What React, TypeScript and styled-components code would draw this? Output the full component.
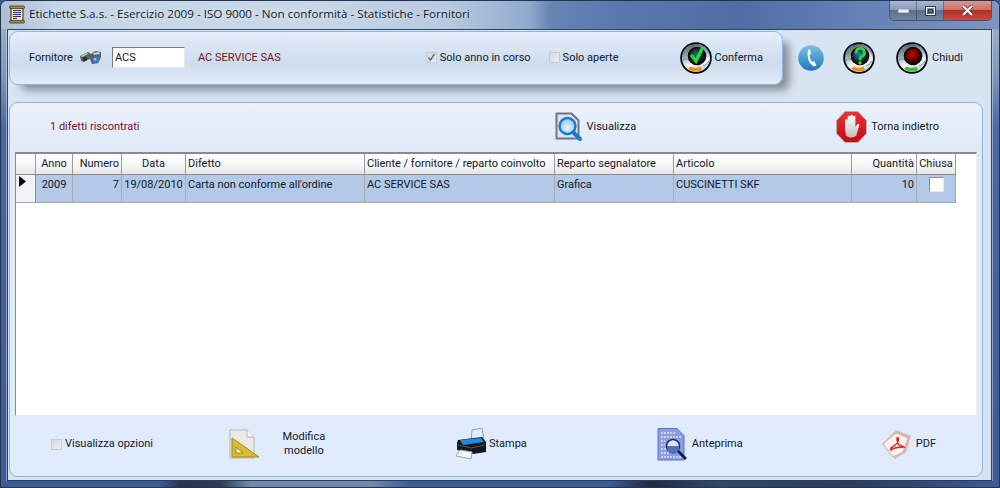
import React from "react";
import styled, { createGlobalStyle } from "styled-components";

const Global = createGlobalStyle`
  html, body { margin: 0; padding: 0; width: 1000px; height: 488px; overflow: hidden; background: #3c5a96; }
  body { font-family: Roboto, "Liberation Sans", Arial, sans-serif; font-size: 11px; color: #10182a; }
  * { box-sizing: border-box; }
`;

const Win = styled.div`
  width: 1000px; height: 488px; display: flex; flex-direction: column;
  border: 1px solid #24344f; border-radius: 7px 7px 0 0; overflow: hidden;
  background: linear-gradient(180deg, #a6b8d0 0, #8098bc 15%, #4a68a4 26%, #3d5a98 100%);
`;
const TitleBar = styled.div`
  height: 28px; flex: none; display: flex; align-items: flex-start; padding-left: 7px; position: relative;
  background: linear-gradient(90deg, #aebfd4 0, #c6d6e8 6%, #c9d8e9 30%, #b6c9e0 45%, #90a9cc 53%, #6684b5 55%, #5a78ae 62%, #4f6ea6 74%, #6180b4 85%, #7f95c0 100%);
`;
const AppIcon = styled.svg` width: 18px; height: 19px; margin-top: 4px; flex: none; `;
const TitleText = styled.span`
  font-family: "Open Sans", "Liberation Sans", sans-serif; font-size: 11.65px; margin: 4px 0 0 3px; color: #101c28; line-height: 17px;
  text-shadow: 0 0 6px rgba(255,255,255,.7);
`;
const Controls = styled.div`
  position: absolute; right: 7px; top: 0; display: flex; height: 20px; width: 103px;
  border: 1px solid #44546e; border-top: 0; border-radius: 0 0 5px 5px; overflow: hidden;
`;
const Ctl = styled.div<{ $w: number; $close?: boolean }>`
  width: ${(p) => p.$w}px; display: flex; align-items: center; justify-content: center;
  border-right: 1px solid rgba(40,50,70,.45);
  background: ${(p) => p.$close
    ? "linear-gradient(180deg,#d89a90 0,#c9726a 45%,#b03028 50%,#c84a3c 100%)"
    : "linear-gradient(180deg,#a8b8d0 0,#8a9cba 45%,#5c708f 50%,#71859f 100%)"};
  &:last-child { border-right: 0; }
`;
const Client = styled.div`
  flex: 1; min-height: 0; margin: 0 7px 0 6px; border: 1px solid #35435a; border-bottom-color: #2c3c58;
  background: linear-gradient(180deg, #d7e4f2, #d4e2f1);
  padding: 1px 8px 3px 1px; display: flex; flex-direction: column;
  box-shadow: 0 0 0 1px rgba(230,240,250,.45);
`;
const BottomFrame = styled.div`
  height: 6px; flex: none;
  background: linear-gradient(90deg, #3c5a96 0, #3c5a96 16%, #28344a 18%, #2e3c54 22%, #6f8cae 25%, #6f8cae 37%, #3c5a96 41%, #3c5a96 61%, #1e2a44 65%, #34486c 72%, #2a3a5c 85%, #3c5a96 100%);
`;
const TopRow = styled.div` display: flex; align-items: flex-start; height: 71px; flex: none; `;
const FilterPanel = styled.div`
  width: 774px; height: 54px; flex: none; display: flex; align-items: center; padding: 0 0 1px 19px;
  border: 1px solid #8fb5e4; border-radius: 9px;
  background: linear-gradient(180deg, #e6eff9 0, #dbe6f4 25%, #cddcee 60%, #dde8f7 90%, #e0eaf9 100%);
  box-shadow: 9px 8px 8px -3px rgba(30,30,30,.45);
`;
const Label = styled.span<{ $ml?: number; $color?: string }>`
  margin-left: ${(p) => p.$ml ?? 0}px; color: ${(p) => p.$color ?? "#10182a"}; white-space: nowrap; line-height: 14px; flex: none;
`;
const Code = styled.input`
  width: 73px; height: 21px; margin-left: 10px; padding: 0 2px; flex: none; font: 11px Roboto, Arial, sans-serif; color: #10182a;
  background: #fff; border: 1px solid; border-color: #7c7c7c #e8e8e8 #e8e8e8 #7c7c7c; outline: 0;
`;
const Check = styled.span<{ $ml?: number }>`
  width: 11px; height: 11px; margin-left: ${(p) => p.$ml ?? 0}px; margin-right: 3px; flex: none; display: inline-flex; align-items: center; justify-content: center;
  border: 1px solid #c8ccd2; background: linear-gradient(135deg, #d2d6dc, #eef0f3);
`;
const Glyph = styled.svg<{ $ml?: number; $mr?: number }>`
  flex: none; display: block; margin-left: ${(p) => p.$ml ?? 0}px; margin-right: ${(p) => p.$mr ?? 0}px;
`;
const OutsideActions = styled.div` display: flex; align-items: center; height: 54px; padding-left: 15px; `;

const Main = styled.div`
  flex: 1; min-height: 0; display: flex; flex-direction: column;
  border: 1px solid #8fb5e4; border-radius: 9px; padding: 0 6px 0 5px;
  background: linear-gradient(180deg, #e9f1fa 0, #e0eaf8 12%, #e0ebfb 100%);
`;
const Toolbar = styled.div` height: 49px; flex: none; display: flex; align-items: center; padding-bottom: 2px; `;
const Grid = styled.div`
  height: 264px; flex: none; width: 962px; background: #fff;
  border: 1px solid; border-color: #8a8a8a #f0f0f0 #e6e6e6 #8a8a8a; border-top-width: 2px;
`;
const COLS = "20px 37px 49px 64px 179px 190px 119px 178px 65px 39px";
const HeadRow = styled.div`
  display: grid; grid-template-columns: ${COLS}; height: 21px; width: 940px; border-bottom: 1px solid #8c8c8c;
`;
const Head = styled.div<{ $align?: string }>`
  background: linear-gradient(180deg, #ffffff 0, #f8f8f8 50%, #e6e6e6 100%);
  border-right: 1px solid #9c9c9c; padding: 0 2px; line-height: 19px; white-space: nowrap; overflow: hidden; text-align: ${(p) => p.$align ?? "left"};
`;
const BodyRow = styled.div`
  display: grid; grid-template-columns: ${COLS}; height: 28px; width: 940px;
`;
const Selector = styled.div`
  border-right: 1px solid #8c8c8c; border-bottom: 1px solid #a8a8a8; padding: 1px 0 0 3px; background: #f0f4f9;
`;
const Cell = styled.div<{ $align?: string }>`
  background: #b3c9e8; border-right: 1px solid #aaa9a2; border-bottom: 1px solid #aaa9a2; padding: 0 2px; line-height: 20px; white-space: nowrap; text-align: ${(p) => p.$align ?? "left"};
`;
const BoxCell = styled(Cell)` display: flex; justify-content: center; padding-top: 2px; `;
const GridBox = styled.span`
  width: 15px; height: 15px; background: #fff; border: 1px solid; border-color: #8c8c8c #e8e8e8 #e8e8e8 #8c8c8c; display: block;
`;
const Footer = styled.div` flex: 1; display: flex; align-items: center; padding-bottom: 4px; `;
const TwoLine = styled.span<{ $ml: number }>`
  margin-left: ${(p) => p.$ml}px; text-align: center; line-height: 14px; flex: none; width: 50px;
`;

const Orb = ({ id, core, rim, ml, mr, children }: { id: string; core: string; rim: string; ml?: number; mr?: number; children?: React.ReactNode }) => (
  <Glyph width={32} height={32} viewBox="0 0 32 32" $ml={ml} $mr={mr}>
    <defs>
      <linearGradient id={id + "m"} x1=".2" y1="0" x2=".5" y2="1">
        <stop offset="0" stopColor="#585858" /><stop offset=".4" stopColor="#a8a8a8" /><stop offset=".72" stopColor="#fafafa" /><stop offset="1" stopColor="#d0d0d0" />
      </linearGradient>
      <radialGradient id={id + "c"} cx=".45" cy=".4" r=".62">
        <stop offset="0" stopColor={core} /><stop offset="1" stopColor="#140608" />
      </radialGradient>
    </defs>
    <circle cx="16" cy="16" r="15.8" fill="#08080a" />
    <circle cx="16" cy="16" r="14" fill={`url(#${id}m)`} />
    <path d="M8 27a14 14 0 0 0 14 1l-1.500-3.500a11 11 0 0 1-10 0z" fill={rim} />
    <path d="M3 11a14 14 0 0 1 7-7.500M19 2.500a14 14 0 0 1 10 9M2.500 19c2-2.500 4-3 6-1.500M23 24c2-.5 4-2 6-5" fill="none" stroke="#2f9ce0" strokeWidth="1" />
    <circle cx="17" cy="14" r="9.300" fill="#0c0c10" />
    <circle cx="17" cy="14" r="7.400" fill={`url(#${id}c)`} />
    {children}
  </Glyph>
);

const Binoculars = () => (
  <Glyph width={23} height={16} viewBox="0 0 23 16" $ml={6}>
    <path d="M1 6l8-4 3 2 4-3 6 1v5l-3 6-6 1-2-5-3 1-3 2-3-1z" fill="#5e6066" />
    <path d="M2 6l6-3 1 1-6 3zM14 3l6-1 1 2-6 1z" fill="#c9ccd2" />
    <circle cx="17" cy="10" r="3.400" fill="#2d7fd0" />
    <circle cx="6" cy="9" r="2.200" fill="#2f3036" />
    <circle cx="16.200" cy="9.200" r="1.200" fill="#9fd0f5" />
  </Glyph>
);

export default function App() {
  return (
    <Win>
      <Global />
      <TitleBar>
        <AppIcon viewBox="0 0 18 19">
          <rect x="3" y="2" width="12" height="15" fill="#f5e6a0" stroke="#2a2418" />
          <rect x="1.500" y="1" width="15" height="2.500" rx="1" fill="#a88a50" stroke="#2a2418" strokeWidth=".7" />
          <rect x="1.500" y="15.500" width="15" height="2.500" rx="1" fill="#a88a50" stroke="#2a2418" strokeWidth=".7" />
          <path d="M5 5.500h8M5 7.500h8M5 9.500h8M5 11.500h8M5 13.500h4" stroke="#2020d8" strokeWidth="1.200" />
        </AppIcon>
        <TitleText>Etichette S.a.s. - Esercizio 2009 - ISO 9000 - Non conformità - Statistiche - Fornitori</TitleText>
        <Controls>
          <Ctl $w={28}><svg width="11" height="4"><rect width="11" height="4" fill="#eef2f8" stroke="#3c4a60" strokeWidth=".5" /></svg></Ctl>
          <Ctl $w={27}><svg width="11" height="10"><rect x=".5" y=".5" width="10" height="9" fill="none" stroke="#2e3c54" /><rect x="1.500" y="1.500" width="8" height="7" fill="none" stroke="#f0f4fa" /><rect x="3.500" y="3.500" width="4" height="3" fill="none" stroke="#2e3c54" /></svg></Ctl>
          <Ctl $w={48} $close><svg width="13" height="11" viewBox="0 0 13 11"><path d="M2 1l9 9M11 1l-9 9" stroke="#40302c" strokeWidth="3.600" /><path d="M2 1l9 9M11 1l-9 9" stroke="#f8f4f2" strokeWidth="2.400" /></svg></Ctl>
        </Controls>
      </TitleBar>
      <Client>
        <TopRow>
          <FilterPanel>
            <Label>Fornitore</Label>
            <Binoculars />
            <Code defaultValue="ACS" />
            <Label $ml={13} $color="#7a1014">AC SERVICE SAS</Label>
            <Check $ml={145}>
              <svg width="9" height="9" viewBox="0 0 9 9"><path d="M1.500 4.500l2 2.500 4-6" fill="none" stroke="#5a6a92" strokeWidth="1.500" /></svg>
            </Check>
            <Label>Solo anno in corso</Label>
            <Check $ml={18} />
            <Label>Solo aperte</Label>
            <Orb id="a" core="#1a6a8a" rim="#f0901c" ml={61} mr={3}>
              <path d="M12 14l4 5 6-12" fill="none" stroke="#2fd62f" strokeWidth="3.400" strokeLinecap="round" />
            </Orb>
            <Label>Conferma</Label>
          </FilterPanel>
          <OutsideActions>
            <Glyph width={26} height={26} viewBox="0 0 26 26">
              <defs><linearGradient id="ph" x1="0" y1="0" x2="0" y2="1"><stop offset="0" stopColor="#7cc0e8" /><stop offset="1" stopColor="#1c7ab8" /></linearGradient></defs>
              <circle cx="13" cy="13" r="12.800" fill="url(#ph)" />
              <path d="M10 5l2-1 1 5-1.500 1c0 3 1 5 3 7l1.500-1 2.500 4-2 1.500c-5-1-8-9-6.500-16.500z" fill="#fff" />
            </Glyph>
            <Orb id="h" core="#1b86c0" rim="#f0901c" ml={19}>
              <path d="M13 10.500a4.200 4.200 0 1 1 6 3.800c-1.400.8-2 1.500-2 3" fill="none" stroke="#2fd62f" strokeWidth="2.800" strokeLinecap="round" />
              <circle cx="17" cy="21" r="1.700" fill="#2fd62f" />
            </Orb>
            <Orb id="x" core="#e00000" rim="#38c038" ml={21} mr={4} />
            <Label>Chiudi</Label>
          </OutsideActions>
        </TopRow>
        <Main>
          <Toolbar>
            <Label $ml={35} $color="#7a1030">1 difetti riscontrati</Label>
            <Glyph width={28} height={30} viewBox="0 0 28 30" $ml={416} $mr={3}>
              <defs><radialGradient id="lens" cx=".5" cy=".6" r=".6"><stop offset="0" stopColor="#e8f4fd" /><stop offset="1" stopColor="#8cc4f0" /></radialGradient></defs>
              <path d="M1.500 1.500h15l7 7v18h-22z" fill="#dfe4ea" stroke="#6e7684" strokeWidth="2" strokeLinejoin="round" />
              <circle cx="12.500" cy="14" r="8" fill="url(#lens)" stroke="#1c78d0" strokeWidth="2.400" />
              <path d="M18.500 20.500l6.500 6.500" stroke="#1c78d0" strokeWidth="4" strokeLinecap="round" />
            </Glyph>
            <Label>Visualizza</Label>
            <Glyph width={31} height={32} viewBox="0 0 31 32" $ml={200} $mr={4}>
              <defs>
                <linearGradient id="stopbg" x1="0" y1="0" x2="0" y2="1"><stop offset="0" stopColor="#f03030" /><stop offset="1" stopColor="#c00c10" /></linearGradient>
                <linearGradient id="hand" x1="0" y1="0" x2="0" y2="1"><stop offset="0" stopColor="#fff" /><stop offset="1" stopColor="#c4bebe" /></linearGradient>
              </defs>
              <path d="M9 .5h13l8.500 9v13l-8.500 9H9l-8.500-9v-13z" fill="url(#stopbg)" stroke="#b8b0b0" />
              <path d="M9 18V9.500a1.300 1.300 0 0 1 2.600 0V6a1.300 1.300 0 0 1 2.600 0V5a1.300 1.300 0 0 1 2.600 0v1a1.300 1.300 0 0 1 2.600 0v10l1.600-2.600c1.200-1.500 3-.5 2.200 1L20.500 24c-1 3-9.500 3.400-10.500 0z" fill="url(#hand)" />
            </Glyph>
            <Label>Torna indietro</Label>
          </Toolbar>
          <Grid>
            <HeadRow>
              <Head />
              <Head $align="center">Anno</Head>
              <Head $align="right">Numero</Head>
              <Head $align="center">Data</Head>
              <Head>Difetto</Head>
              <Head>Cliente / fornitore / reparto coinvolto</Head>
              <Head>Reparto segnalatore</Head>
              <Head>Articolo</Head>
              <Head $align="right">Quantità</Head>
              <Head $align="center">Chiusa</Head>
            </HeadRow>
            <BodyRow>
              <Selector><svg width="7" height="11" viewBox="0 0 7 11"><path d="M0 0l7 5.500L0 11z" fill="#000" /></svg></Selector>
              <Cell $align="center">2009</Cell>
              <Cell $align="right">7</Cell>
              <Cell $align="center">19/08/2010</Cell>
              <Cell>Carta non conforme all'ordine</Cell>
              <Cell>AC SERVICE SAS</Cell>
              <Cell>Grafica</Cell>
              <Cell>CUSCINETTI SKF</Cell>
              <Cell $align="right">10</Cell>
              <BoxCell><GridBox /></BoxCell>
            </BodyRow>
          </Grid>
          <Footer>
            <Check $ml={36} />
            <Label>Visualizza opzioni</Label>
            <Glyph width={31} height={30} viewBox="0 0 31 30" $ml={76}>
              <path d="M1 1h17l7 7v21H1z" fill="#eceae6" stroke="#b4b4b8" />
              <path d="M18 1v7h7" fill="#fafafa" stroke="#b4b4b8" />
              <path d="M3 9v19h27z" fill="#dcbc30" stroke="#a08818" />
              <path d="M7 18v6h7z" fill="#f2f2f4" stroke="#a08818" />
            </Glyph>
            <TwoLine $ml={19}>Modifica<br />modello</TwoLine>
            <Glyph width={32} height={32} viewBox="0 0 32 32" $ml={126} $mr={2}>
              <path d="M17 2L27 0l2 12-13 1z" fill="#e0ecf6" stroke="#7ea8d0" />
              <path d="M3 12l24-3 4 5v10l-13 2-16-4v-7z" fill="#14181e" />
              <path d="M5 12l21-2 3 4-21 3z" fill="#1e8ae0" />
              <path d="M3 17l13 3 14-3" fill="none" stroke="#4c5660" />
              <path d="M5 22l12 2-1 7-15-3z" fill="#f6f7f8" stroke="#a0a8b0" />
            </Glyph>
            <Label>Stampa</Label>
            <Glyph width={32} height={33} viewBox="0 0 32 33" $ml={130} $mr={3}>
              <path d="M1 .5h19l7 7V32H1z" fill="#8c9ee0" stroke="#5a70c8" />
              <path d="M4 5h15M4 9h20M4 13h4M4 17h4M4 21h5M4 25h8M4 29h20" stroke="#c6d0f0" strokeWidth="2" strokeDasharray="2 1" />
              <circle cx="16" cy="18" r="6.500" fill="#d8e4f4" stroke="#1a2a70" strokeWidth="1.500" />
              <path d="M10 18h12v2a6 6 0 0 1-12 0z" fill="#5070b8" />
              <path d="M21 23l8 8" stroke="#101850" strokeWidth="2.600" />
            </Glyph>
            <Label>Anteprima</Label>
            <Glyph width={31} height={31} viewBox="0 0 31 31" $ml={138} $mr={4}>
              <path d="M1 15L15 1l15 6-5 16-11 7z" fill="#e0b4b0" />
              <path d="M2 15L15 4l12 5-5 14-10 5z" fill="#f6f2f0" stroke="#c8b8b4" />
              <path d="M10 19c4-2 9-7 7-10-1-2-2 3 1 7 1 1 4 1 5 2-3 0-9 0-13 3z" fill="none" stroke="#e02020" strokeWidth="1.500" />
            </Glyph>
            <Label>PDF</Label>
          </Footer>
        </Main>
      </Client>
      <BottomFrame />
    </Win>
  );
}
